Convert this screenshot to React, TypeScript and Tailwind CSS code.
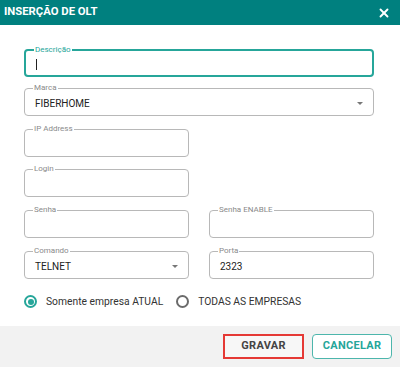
import { X } from 'lucide-react'

type FieldProps = {
  label: string
  value?: string
  focused?: boolean
  select?: boolean
  cursor?: boolean
  className?: string
}

function Field({ label, value, focused, select, cursor, className = '' }: FieldProps) {
  return (
    <div
      className={`relative h-[28px] rounded-[4px] ${
        focused ? 'border-2 border-[#26a69a]' : 'border border-[#b8b8b8]'
      } ${className}`}
    >
      <span
        className={`absolute left-[8px] top-[-6px] bg-white px-[1px] text-[8px] leading-[10px] ${
          focused ? 'text-[#26a69a]' : 'text-[#8a8a8a]'
        }`}
      >
        {label}
      </span>
      <div className="flex h-full items-center pl-[10px] pr-[10px] pt-[3px] text-[10px] text-[#222]">
        {cursor && <span className="h-[11px] w-px bg-[#222]" />}
        {value && <span className="flex-1">{value}</span>}
        {select && (
          <span className="ml-auto h-0 w-0 border-x-[3px] border-t-[3px] border-x-transparent border-t-[#777]" />
        )}
      </div>
    </div>
  )
}

function Radio({ checked, label }: { checked?: boolean; label: string }) {
  return (
    <label className="flex items-center gap-[9px]">
      <span
        className={`flex h-[13px] w-[13px] items-center justify-center rounded-full border-2 ${
          checked ? 'border-[#26a69a]' : 'border-[#6b6b6b]'
        }`}
      >
        {checked && <span className="h-[6px] w-[6px] rounded-full bg-[#26a69a]" />}
      </span>
      <span className="text-[10.3px] text-[#333]">{label}</span>
    </label>
  )
}

export default function App() {
  return (
    <div className="flex h-[367px] w-[400px] flex-col bg-white font-['Roboto',sans-serif]">
      <div className="flex h-[25px] items-center justify-between bg-[#00807f] pl-[4px] pr-[9px]">
        <h1 className="text-[11.3px] font-bold text-white">INSERÇÃO DE OLT</h1>
        <X size={14} strokeWidth={3.2} className="text-white" />
      </div>

      <div className="flex flex-1 flex-col pl-[24px] pr-[26px] pt-[24px]">
        <Field label="Descrição" focused cursor />
        <Field label="Marca" value="FIBERHOME" select className="mt-[11px]" />
        <Field label="IP Address" className="mt-[13px] w-[165px]" />
        <Field label="Login" className="mt-[12px] w-[165px]" />
        <div className="mt-[13px] grid grid-cols-[165px_165px] gap-x-[20px] gap-y-[13px]">
          <Field label="Senha" />
          <Field label="Senha ENABLE" />
          <Field label="Comando" value="TELNET" select />
          <Field label="Porta" value="2323" />
        </div>
        <div className="mt-[15px] flex items-center gap-[13px]">
          <Radio checked label="Somente empresa ATUAL" />
          <Radio label="TODAS AS EMPRESAS" />
        </div>
      </div>

      <div className="flex h-[41px] items-center justify-end gap-[8px] bg-[#f2f2f2] pr-[8px]">
        <button className="h-[25px] w-[81px] border-2 border-[#e53935] bg-[#f7f7f7] text-[11px] font-bold tracking-[0.3px] text-[#444]">
          GRAVAR
        </button>
        <button className="h-[25px] w-[80px] rounded-[4px] border border-[#4db6ac] bg-white text-[11px] font-bold tracking-[0.3px] text-[#26a69a]">
          CANCELAR
        </button>
      </div>
    </div>
  )
}
